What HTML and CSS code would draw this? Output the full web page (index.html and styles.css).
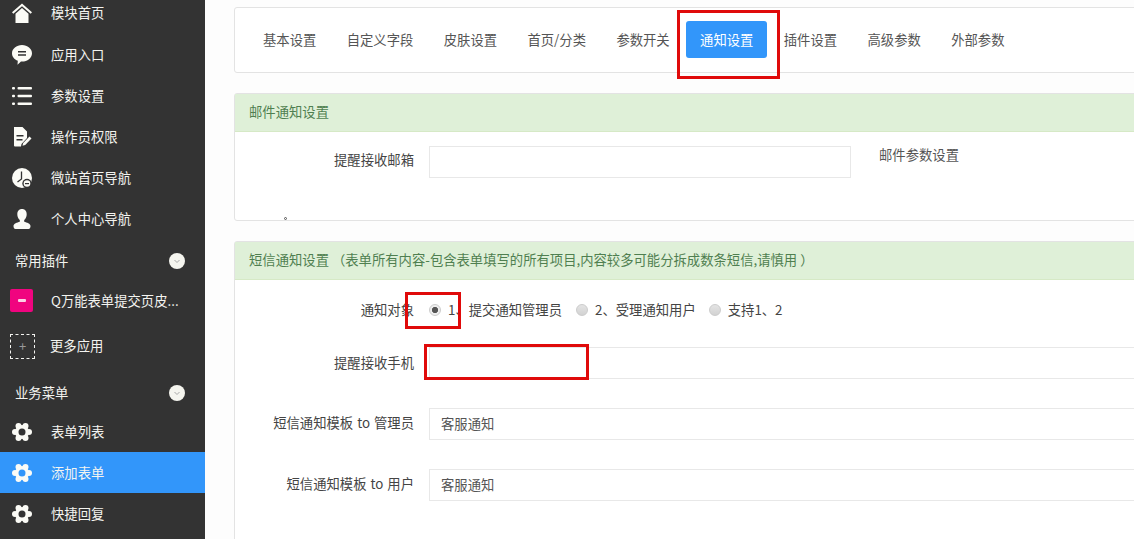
FILE: index.html
```html
<!DOCTYPE html>
<html lang="zh">
<head>
<meta charset="utf-8">
<title>通知设置</title>
<link rel="stylesheet" href="styles.css">
</head>
<body>
<svg class="defs" width="0" height="0" aria-hidden="true">
  <symbol id="gear" viewBox="0 0 20 20">
    <circle cx="10" cy="10" r="7"/>
    <circle cx="3" cy="10" r="3"/><circle cx="17" cy="10" r="3"/>
    <circle cx="6.500" cy="3.940" r="3"/><circle cx="13.500" cy="3.940" r="3"/>
    <circle cx="6.500" cy="16.060" r="3"/><circle cx="13.500" cy="16.060" r="3"/>
    <circle class="hole" cx="10" cy="10" r="3.500"/>
  </symbol>
  <symbol id="chev" viewBox="0 0 16 16">
    <circle cx="8" cy="8" r="8" fill="#f5f5ef"/>
    <path d="M5.500 7l2.500 2.500L10.500 7" fill="none" stroke="#a9a9a9" stroke-width="1"/>
  </symbol>
</svg>

<aside class="sidebar">
  <ul class="menu">
    <li class="item first">
      <svg class="ico" viewBox="0 0 20 20"><path d="M0 9.300L10 .5l10 8.800-1.300 1.400L10 3.200 1.300 10.700z"/><path d="M3.500 10.700L10 5l6.500 5.700V20h-13z"/></svg>
      <span>模块首页</span>
    </li>
    <li class="item">
      <svg class="ico" viewBox="0 0 20 20"><path d="M10 0c5.500 0 10 3.700 10 8.300s-4.500 8.300-10 8.300l-1 0-3.500 3.200.3-4C2.300 14.500 0 11.600 0 8.300 0 3.700 4.500 0 10 0z"/><path class="dark" d="M6 6h8v1.500H6zM6 9.300h8v1.500H6z"/></svg>
      <span>应用入口</span>
    </li>
    <li class="item">
      <svg class="ico" viewBox="0 0 20 20"><rect x="0" y="1" width="3" height="2.600" rx="1"/><rect x="5.500" y="1" width="14.500" height="2.600" rx="1"/><rect x="0" y="8.700" width="3" height="2.600" rx="1"/><rect x="5.500" y="8.700" width="14.500" height="2.600" rx="1"/><rect x="0" y="16.400" width="3" height="2.600" rx="1"/><rect x="5.500" y="16.400" width="14.500" height="2.600" rx="1"/></svg>
      <span>参数设置</span>
    </li>
    <li class="item">
      <svg class="ico" viewBox="0 0 20 20"><path d="M2 0h8.500L15 4.500V11l-5.500 6-.5 2.500H3a1 1 0 0 1-1-1z"/><path class="dark" d="M4.500 8h7v1.400h-7zM4.500 12h6v1.400h-6z"/><path d="M10.500 18.700l.7-2.800 6.300-6.300 2 2-6.300 6.300z"/></svg>
      <span>操作员权限</span>
    </li>
    <li class="item">
      <svg class="ico" viewBox="0 0 20 20"><circle cx="10" cy="10" r="10"/><path class="line" d="M9.500 3.500v7.500l-4 3"/><circle class="dark" cx="15" cy="15.500" r="4.700"/><circle cx="15" cy="15.500" r="3.300"/><rect class="dark" x="13" y="15" width="4" height="1.200"/></svg>
      <span>微站首页导航</span>
    </li>
    <li class="item">
      <svg class="ico" viewBox="0 0 20 20"><path d="M10 0c3 0 4.700 2.200 4.700 5.200 0 2.300-1 4.600-2.500 5.800v1.700c2.600.7 6.300 1.900 6.300 4.300 0 1.500-.5 3-2 3h-13c-1.500 0-2-1.500-2-3 0-2.400 3.700-3.600 6.300-4.300V11C6.300 9.800 5.300 7.500 5.300 5.200 5.300 2.200 7 0 10 0z"/></svg>
      <span>个人中心导航</span>
    </li>
    <li class="section section-a">
      <span>常用插件</span>
      <svg class="chev"><use href="#chev"/></svg>
    </li>
    <li class="item plugin">
      <span class="pink"><i></i></span>
      <span>Q万能表单提交页皮...</span>
    </li>
    <li class="item more">
      <span class="dashed">+</span>
      <span>更多应用</span>
    </li>
    <li class="section section-b">
      <span>业务菜单</span>
      <svg class="chev"><use href="#chev"/></svg>
    </li>
    <li class="item">
      <svg class="ico"><use href="#gear"/></svg>
      <span>表单列表</span>
    </li>
    <li class="item active">
      <svg class="ico"><use href="#gear"/></svg>
      <span>添加表单</span>
    </li>
    <li class="item">
      <svg class="ico"><use href="#gear"/></svg>
      <span>快捷回复</span>
    </li>
  </ul>
</aside>

<main class="main">
  <nav class="card tabs">
    <a class="tab">基本设置</a>
    <a class="tab">自定义字段</a>
    <a class="tab">皮肤设置</a>
    <a class="tab">首页/分类</a>
    <a class="tab">参数开关</a>
    <a class="tab on">通知设置</a>
    <a class="tab">插件设置</a>
    <a class="tab">高级参数</a>
    <a class="tab">外部参数</a>
  </nav>

  <section class="card panel mail">
    <header class="head">邮件通知设置</header>
    <div class="body">
      <div class="row">
        <label class="lab up">提醒接收邮箱</label>
        <div class="input narrow"></div>
        <span class="help">邮件参数设置</span>
      </div>
    </div>
  </section>

  <section class="card panel sms">
    <header class="head">短信通知设置 （表单所有内容-包含表单填写的所有项目,内容较多可能分拆成数条短信,请慎用 ）</header>
    <div class="body">
      <div class="row radios">
        <label class="lab">通知对象</label>
        <div class="options">
          <span class="opt opt-first"><i class="radio checked"></i>1、提交通知管理员</span>
          <span class="opt"><i class="radio"></i>2、受理通知用户</span>
          <span class="opt"><i class="radio"></i>支持1、2</span>
        </div>
      </div>
      <div class="row">
        <label class="lab">提醒接收手机</label>
        <div class="input"></div>
      </div>
      <div class="row">
        <label class="lab up wide">短信通知模板 to 管理员</label>
        <div class="input">客服通知</div>
      </div>
      <div class="row">
        <label class="lab up wide">短信通知模板 to 用户</label>
        <div class="input">客服通知</div>
      </div>
    </div>
  </section>
</main>

<i class="speck"></i>
<div class="mark mark-tab"></div>
<div class="mark mark-radio"></div>
<div class="mark mark-phone"></div>
</body>
</html>
```

FILE: styles.css
```css
* { box-sizing: border-box; }

html, body {
  margin: 0;
  height: 100%;
  overflow: hidden;
}

body {
  display: flex;
  position: relative;
  background: #fdfdfd;
  font: 13.33px/20px "Noto Sans CJK SC", "Liberation Sans", sans-serif;
  color: #444;
}

.defs { position: absolute; }

/* sidebar */
.sidebar {
  flex: 0 0 205px;
  height: 100vh;
  background: #333;
  color: #f4f4f0;
  overflow: hidden;
  --hole: #333;
}

.menu {
  list-style: none;
  margin: -8px 0 0;
  padding: 0;
}

.item {
  display: flex;
  align-items: center;
  height: 41px;
  padding-left: 12px;
  gap: 19px;
}

.item.first { height: 42px; }
.item.active { background: #3296fa; --hole: #3296fa; }
.item.plugin { height: 35px; padding-left: 10px; gap: 18px; }
.item.more { height: 56px; padding-left: 10px; gap: 15px; }

.ico {
  flex: none;
  width: 20px;
  height: 20px;
  fill: #fbfbf6;
}

.ico .dark { fill: #333; }
.ico .line { fill: none; stroke: #333; stroke-width: 1.300; }
.hole { fill: var(--hole); }

.section {
  display: flex;
  align-items: center;
  justify-content: space-between;
  padding: 0 20px 0 15px;
}

.section-a { height: 44px; }
.section-b { height: 37px; }

.chev { width: 16px; height: 16px; }

.pink {
  flex: none;
  display: flex;
  align-items: center;
  justify-content: center;
  width: 23px;
  height: 23px;
  border-radius: 2px;
  background: #f0047f;
}

.pink i {
  display: block;
  width: 8px;
  height: 3px;
  border-radius: 1px;
  background: #fbd0e4;
}

.dashed {
  flex: none;
  display: flex;
  align-items: center;
  justify-content: center;
  width: 25px;
  height: 25px;
  border: 1px dashed #f4f4f0;
  color: #999;
  font-size: 13px;
}

/* content */
.main {
  flex: 1;
  min-width: 0;
  padding: 7px 0 0 29px;
  overflow: hidden;
}

.card {
  margin-right: -10px;
  border: 1px solid #e3e3e3;
  border-radius: 3px;
  background: #fff;
}

.tabs {
  display: flex;
  align-items: flex-start;
  gap: 2.400px;
  height: 66px;
  padding: 13px 14px 0;
}

.tab {
  flex: none;
  height: 37px;
  padding: 0 14px;
  border-radius: 3px;
  line-height: 37px;
  color: #555;
}

.tab.on {
  background: #3296fa;
  color: #fff;
}

.panel { margin-top: 20px; }
.mail { height: 128px; }
.sms { height: 320px; }

.head {
  height: 38px;
  padding: 0 14px;
  border-bottom: 1px solid #d6e9c6;
  background: #dff0d8;
  line-height: 36px;
  color: #4f7f50;
}

.mail .body { padding-top: 14px; }
.sms .body { padding-top: 19px; }

.row {
  display: flex;
  align-items: center;
  gap: 15px;
  margin-bottom: 29px;
}

.row.radios {
  height: 22px;
  margin-bottom: 26px;
}

.lab {
  flex: 0 0 179px;
  text-align: right;
  color: #444;
}

.lab.up { position: relative; top: -1px; }
.mail .lab.up { top: -2px; }
.lab.wide { word-spacing: 1px; }

.input {
  flex: 1;
  height: 32px;
  padding: 0 11px;
  border: 1px solid #e8e8e8;
  background: #fff;
  line-height: 30px;
  color: #555;
}

.input.narrow { flex: 0 0 422px; }

.help {
  align-self: flex-start;
  margin: -1px 0 0 13px;
  color: #555;
}

.options {
  display: flex;
  gap: 13px;
}

.opt {
  display: flex;
  align-items: center;
  gap: 7px;
}

.opt-first { margin-right: 1px; }

.radio {
  display: block;
  width: 12px;
  height: 12px;
  border: 1px solid #ccc;
  border-radius: 50%;
  background: linear-gradient(#e4e4e4, #d2d2d2);
}

.radio.checked {
  background: radial-gradient(circle, #555 0 2.800px, #eee 3.400px);
}

/* overlays */
.speck {
  position: absolute;
  left: 284px;
  top: 217px;
  width: 3px;
  height: 3px;
  border: 1px solid #555;
  border-radius: 50%;
}

.mark {
  position: absolute;
  border: 3px solid #e00a0a;
}

.mark-tab { left: 677px; top: 10px; width: 103px; height: 69px; }
.mark-radio { left: 405px; top: 292px; width: 56px; height: 37px; }
.mark-phone { left: 424px; top: 344px; width: 165px; height: 36px; }
```
